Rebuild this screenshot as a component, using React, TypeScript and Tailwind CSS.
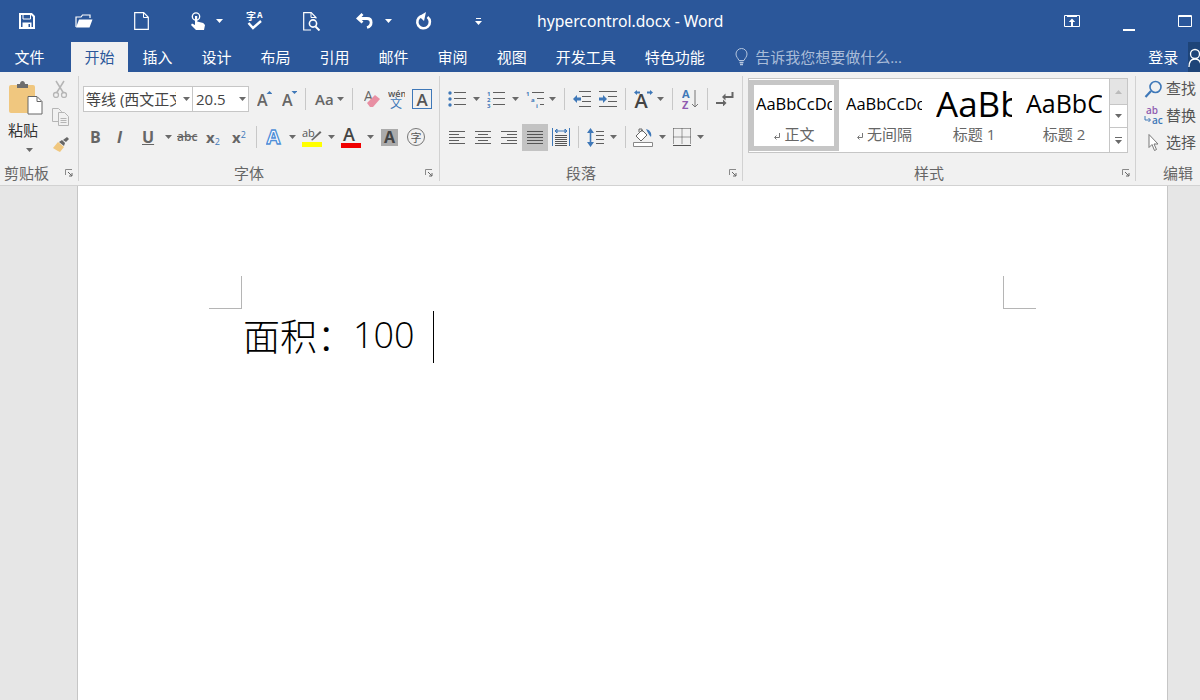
import React from "react";

const G = "#666666";
const B = "#3f78b8";

const I = ({ w, h, children, className = "" }: { w: number; h: number; children: React.ReactNode; className?: string }) => (
  <svg width={w} height={h} viewBox={`0 0 ${w} ${h}`} fill="none" className={`shrink-0 ${className}`}>
    {children}
  </svg>
);
const Caret = ({ c = "#6a6a6a", className = "" }: { c?: string; className?: string }) => (
  <I w={7} h={4} className={className}>
    <path d="M0 0h7L3.5 4z" fill={c} />
  </I>
);
const Sep = ({ className = "" }: { className?: string }) => <div className={`w-px h-[22px] bg-[#c8c8c8] shrink-0 ${className}`} />;
const GroupSep = () => <div className="w-px my-1 bg-[#d2d2d2] shrink-0" />;
const Launcher = ({ className = "" }: { className?: string }) => (
  <I w={8} h={8} className={className}>
    <path d="M.5 6V.5H7" stroke="#8a8a8a" />
    <path d="M3 3l4 4M7 4v3H4" stroke="#666" />
  </I>
);
const HLines = ({ x, ys, w, c = "#5f5f5f" }: { x: number; ys: number[]; w: number; c?: string }) => (
  <>
    {ys.map((y) => (
      <path key={y} d={`M${x} ${y + 0.5}h${w}`} stroke={c} />
    ))}
  </>
);
const Tab = ({ t, className = "" }: { t: string; className?: string }) => (
  <div className={`h-full flex items-center px-[14.5px] text-white text-[15px] ${className}`}>{t}</div>
);
const Style = ({ sample, label, className, mark }: { sample: string; label: string; className: string; mark?: boolean }) => (
  <div className="w-[76px] h-[60px] flex flex-col items-center shrink-0">
    <div className={`w-full h-[38px] flex items-center overflow-hidden whitespace-nowrap text-black ${className}`}>{sample}</div>
    <div className="h-[22px] flex items-center text-[15px] text-[#666] whitespace-nowrap">
      {mark && (
        <I w={8} h={8} className="mr-[3px] mt-[3px]">
          <path d="M6.5 1v4.5H2M3.5 3.5L1.5 5.5l2 2" stroke="#777" />
        </I>
      )}
      {label}
    </div>
  </div>
);

export default function App() {
  return (
    <div className="w-[1200px] h-[700px] overflow-hidden flex flex-col bg-[#e6e6e6] font-['Open_Sans','Noto_Sans_CJK_SC',sans-serif]">
      {/* title bar */}
      <div className="h-[42px] bg-[#2b579a] flex items-center shrink-0 text-white">
        <I w={16} h={16} className="ml-[19px]">
          <path d="M1 1h11.5L15 3.5V15H1z" stroke="#fff" strokeWidth="2" />
          <path d="M4 1.5h7.5v4.5H4z" stroke="#fff" />
          <path d="M3.5 9.5h9V15h-9z" fill="#fff" />
          <path d="M9.5 11h1.5v3H9.5z" fill="#2b579a" />
        </I>
        <I w={18} h={14} className="ml-[40px]">
          <path d="M1 13V3h5l1.5-2H15v3" stroke="#fff" strokeWidth="1.2" />
          <path d="M1 13.5L4 5.5h13.5L14.5 13.5z" fill="#fff" />
        </I>
        <I w={15} h={18} className="ml-[41px]">
          <path d="M.7.7h9l4.6 4.6v12H.7z" stroke="#fff" strokeWidth="1.2" />
          <path d="M9.5 1v4.5H14" stroke="#fff" />
        </I>
        <I w={16} h={19} className="ml-[41px]">
          <circle cx="6" cy="4.5" r="3.7" stroke="#fff" strokeWidth="1.3" />
          <path d="M5 4h2.2v5.5l6 1.5 1.8 2-1 5H6l-5-5 1-1.5 3 1.5z" fill="#fff" />
        </I>
        <Caret c="#fff" className="ml-[10px]" />
        <I w={18} h={20} className="ml-[23px]">
          <text x="0" y="9" fontSize="10" fill="#fff" fontWeight="700">字</text>
          <text x="11" y="7" fontSize="8" fill="#fff" fontWeight="700">A</text>
          <path d="M2.5 12l4.5 5 8-7" stroke="#fff" strokeWidth="2.4" />
        </I>
        <I w={18} h={19} className="ml-[39px]">
          <path d="M8 18H.7V.7h7.5L13 5.5v1" stroke="#fff" strokeWidth="1.2" />
          <path d="M8 1v4.5h5" stroke="#fff" />
          <circle cx="10" cy="11.5" r="3.6" stroke="#fff" strokeWidth="1.6" />
          <path d="M12.5 14.5l4 4" stroke="#fff" strokeWidth="2" />
        </I>
        <I w={18} h={16} className="ml-[35px]">
          <path d="M6.500 1L2 5.500l4.500 4" stroke="#fff" strokeWidth="2.8" />
          <path d="M3 5.500h8c5.500 0 5.500 7.500 0 9" stroke="#fff" strokeWidth="2.8" />
        </I>
        <Caret c="#fff" className="ml-[11px]" />
        <I w={17} h={18} className="ml-[23px]">
          <path d="M12.500 5A6.300 6.300 0 1 1 6 4.200" stroke="#fff" strokeWidth="2.600" />
          <path d="M11 0L4 4.200l5 4.800z" fill="#fff" />
        </I>
        <I w={7} h={7} className="ml-[43px]">
          <path d="M1 .5h5" stroke="#fff" />
          <path d="M0 3h7L3.5 7z" fill="#fff" />
        </I>
        <div className="ml-[55px] mt-[2px] text-[15.700px] leading-none whitespace-nowrap w-[190px] font-['Noto_Sans',sans-serif]">hypercontrol.docx - Word</div>
        <I w={16} h={12} className="ml-[337px]">
          <path d="M.5.5h15v11H.5z" stroke="#fff" />
          <path d="M3 1.5h10" stroke="#fff" />
          <path d="M8 3.5l3.2 3.5H9v4H7V7H4.800z" fill="#fff" />
        </I>
        <div className="ml-[43px] mt-[17px] w-[12px] h-[2px] bg-white" />
        <I w={14} h={12} className="ml-[43px]">
          <path d="M.5.5h13v11H.5z" stroke="#fff" />
          <path d="M1 1.500h12" stroke="#fff" />
        </I>
      </div>

      {/* tabs */}
      <div className="h-[30px] bg-[#2b579a] flex items-center shrink-0 whitespace-nowrap">
        <Tab t="文件" className="mr-[12px]" />
        <div className="h-full flex items-center px-[13.5px] bg-[#f1f1f1] text-[#2b579a] text-[15px]">开始</div>
        <Tab t="插入" />
        <Tab t="设计" />
        <Tab t="布局" />
        <Tab t="引用" />
        <Tab t="邮件" />
        <Tab t="审阅" />
        <Tab t="视图" />
        <Tab t="开发工具" />
        <Tab t="特色功能" />
        <I w={13} h={18} className="ml-[16px]">
          <path d="M4 12.500C3 10 1 9 1 6a5.500 5.500 0 0 1 11 0c0 3-2 4-3 6.500z" stroke="#b5c6de" />
          <path d="M4.500 14.500h4M5 16.500h3" stroke="#b5c6de" strokeWidth="1.4" />
        </I>
        <div className="ml-[7px] w-[393px] shrink-0 text-[15px] text-[#a9bcd8]">告诉我您想要做什么...</div>
        <div className="shrink-0 text-[15px] text-white">登录</div>
        <div className="ml-[10px] h-full w-[12px] shrink-0 bg-[#1e4478] overflow-hidden">
          <I w={16} h={24} className="mt-[3px]">
            <circle cx="7" cy="9" r="4.500" stroke="#fff" strokeWidth="1.300" />
            <path d="M1 22c0-5 2-8 6-8s6 3 6 8" stroke="#fff" strokeWidth="1.300" />
          </I>
        </div>
      </div>

      {/* ribbon */}
      <div className="h-[114px] bg-[#f1f1f1] border-b border-[#d2d2d2] flex shrink-0 text-[#666]">
        {/* clipboard */}
        <div className="w-[78px] flex flex-col shrink-0">
          <div className="flex h-[87px]">
            <div className="ml-[8px] w-[36px] flex flex-col items-start">
              <I w={36} h={36} className="mt-[8px]">
                <rect x="1" y="5" width="26" height="28" rx="2" fill="#f0c77f" />
                <path d="M9 4h3c0-4 5-4 5 0h3v4H9z" fill="#6d6d6d" />
                <path d="M20 16.500h9l5 5V34H20z" fill="#fff" stroke="#666" />
                <path d="M29 17v4.500h4.500" stroke="#666" />
              </I>
              <div className="mt-[4px] text-[15px] leading-[20px] text-[#333]">粘贴</div>
              <Caret className="mt-[8px] ml-[18px]" />
            </div>
            <div className="ml-[8px] w-[18px] flex flex-col items-start">
              <I w={16} h={18} className="mt-[8px]">
                <path d="M4 1l7.500 12M12 1L4.500 13" stroke="#b5b5b5" strokeWidth="1.500" />
                <circle cx="4" cy="15" r="2.500" stroke="#b5b5b5" strokeWidth="1.300" />
                <circle cx="12" cy="15" r="2.500" stroke="#b5b5b5" strokeWidth="1.300" />
              </I>
              <I w={17} h={18} className="mt-[10px]">
                <path d="M.5.500h6l3 3v10H.5z" fill="#f1f1f1" stroke="#b5b5b5" />
                <path d="M6.500 4.500h6l4 4v9h-10z" fill="#f1f1f1" stroke="#b5b5b5" />
                <path d="M8.500 10.500h6M8.500 12.500h6M8.500 14.500h6" stroke="#b5b5b5" />
              </I>
              <I w={18} h={16} className="mt-[11px]">
                <path d="M1 11l5-6 6 5-4 5C5 14 3 12 1 11z" fill="#f0c77f" />
                <path d="M7 5l3-2 3 3-1 3z" fill="#666" />
                <path d="M11 3l4-3 2 2-3 3z" fill="#666" />
              </I>
            </div>
          </div>
          <div className="mt-auto mb-[4px] h-[16px] flex items-center">
            <span className="ml-[4px] text-[15px]">剪贴板</span>
            <Launcher className="ml-auto mr-[5px]" />
          </div>
        </div>
        <GroupSep />

        {/* font */}
        <div className="w-[360px] flex flex-col shrink-0">
          <div className="mt-[14px] h-[26px] flex items-center">
            <div className="ml-[4px] w-[110px] h-[26px] bg-white border border-[#c6c6c6] flex items-center shrink-0">
              <div className="ml-[2px] w-[90px] overflow-hidden whitespace-nowrap text-[15px] text-[#444]">等线 (西文正文)</div>
              <Caret className="ml-[7px]" />
            </div>
            <div className="-ml-px w-[57px] h-[26px] bg-white border border-[#c6c6c6] flex items-center shrink-0">
              <div className="ml-[3px] w-[39px] text-[15px] text-[#444]">20.5</div>
              <Caret className="ml-[4px]" />
            </div>
            <I w={15} h={16} className="ml-[8px]">
              <text x="0" y="15" fontSize="16" fontWeight="600" fill={G}>A</text>
              <path d="M9.500 3l3-3 3 3z" fill={B} />
            </I>
            <I w={15} h={16} className="ml-[10px]">
              <text x="0" y="15" fontSize="16" fontWeight="600" fill={G}>A</text>
              <path d="M9.500 0h6l-3 3z" fill={B} />
            </I>
            <Sep className="ml-[8px]" />
            <span className="ml-[9px] w-[18px] text-[15px] font-semibold leading-none shrink-0">Aa</span>
            <Caret className="ml-[4px]" />
            <Sep className="ml-[8px]" />
            <I w={17} h={18} className="ml-[11px]">
              <text x="0" y="11" fontSize="14" fill={G}>A</text>
              <path d="M3 13l8-8 5 4-7 8H6z" fill="#e88fa3" />
            </I>
            <I w={17} h={20} className="ml-[7px]">
              <text x="0" y="8" fontSize="9" fontWeight="600" fill="#555">wén</text>
              <text x="2" y="19" fontSize="12" fill={B}>文</text>
            </I>
            <div className="ml-[7px] w-[20px] h-[20px] border border-[#3f78b8] flex items-center justify-center text-[17px] font-semibold leading-none text-[#555] shrink-0">A</div>
          </div>
          <div className="mt-[12px] h-[26px] flex items-center">
            <span className="ml-[11px] w-[10px] text-[16px] font-bold leading-none shrink-0">B</span>
            <span className="ml-[17px] w-[10px] text-[16px] font-bold italic leading-none shrink-0">I</span>
            <span className="ml-[15px] w-[12px] text-[16px] font-bold underline leading-none shrink-0">U</span>
            <Caret className="ml-[11px]" />
            <span className="ml-[5px] w-[20px] text-[12px] font-semibold line-through leading-none shrink-0">abc</span>
            <span className="ml-[9px] w-[15px] text-[15px] font-bold leading-none shrink-0">
              x<sub className="text-[9px] text-[#3f78b8] font-normal">2</sub>
            </span>
            <span className="ml-[11px] w-[15px] text-[15px] font-bold leading-none shrink-0">
              x<sup className="text-[9px] text-[#3f78b8] font-normal">2</sup>
            </span>
            <Sep className="ml-[9px]" />
            <I w={18} h={19} className="ml-[9px]">
              <text x="0.500" y="16" fontSize="20" fontWeight="700" fill="#fff" stroke="#4f8fd8" strokeWidth="1.300">A</text>
            </I>
            <Caret className="ml-[5px]" />
            <I w={20} h={20} className="ml-[6px]">
              <text x="0" y="10" fontSize="11" fill="#555">ab</text>
              <path d="M9 13l9-9 1.500 1.500-9 8z" fill="#666" />
              <rect y="15" width="20" height="5" fill="#ffff00" />
            </I>
            <Caret className="ml-[6px]" />
            <I w={20} h={21} className="ml-[6px]">
              <text x="2" y="14" fontSize="18" fontWeight="600" fill="#444">A</text>
              <rect y="16" width="20" height="5" fill="#f00000" />
            </I>
            <Caret className="ml-[6px]" />
            <div className="ml-[7px] w-[17px] h-[17px] bg-[#ababab] flex items-center justify-center text-[16px] font-bold leading-none text-[#444] shrink-0">A</div>
            <div className="ml-[9px] w-[18px] h-[18px] rounded-full border border-[#777] flex items-center justify-center text-[11px] leading-none text-[#555] shrink-0">字</div>
          </div>
          <div className="mt-auto mb-[4px] h-[16px] flex items-center">
            <span className="ml-[155px] text-[15px]">字体</span>
            <Launcher className="ml-auto mr-[6px]" />
          </div>
        </div>
        <GroupSep />

        {/* paragraph */}
        <div className="w-[302px] flex flex-col shrink-0">
          <div className="mt-[14px] h-[26px] flex items-center">
            <I w={18} h={18} className="ml-[8px]">
              <circle cx="2" cy="3" r="1.700" fill={B} />
              <circle cx="2" cy="9" r="1.700" fill={B} />
              <circle cx="2" cy="15" r="1.700" fill={B} />
              <HLines x={6} ys={[2, 8, 14]} w={12} />
            </I>
            <Caret className="ml-[7px]" />
            <I w={18} h={18} className="ml-[7px]">
              <text x="0" y="6" fontSize="6" fontWeight="700" fill={B}>1</text>
              <text x="0" y="12" fontSize="6" fontWeight="700" fill={B}>2</text>
              <text x="0" y="18" fontSize="6" fontWeight="700" fill={B}>3</text>
              <HLines x={6} ys={[2, 8, 14]} w={12} />
            </I>
            <Caret className="ml-[7px]" />
            <I w={18} h={18} className="ml-[7px]">
              <text x="0" y="6" fontSize="6" fontWeight="700" fill={B}>1</text>
              <text x="5" y="12" fontSize="6" fontWeight="700" fill={B}>a</text>
              <text x="10" y="18" fontSize="6" fontWeight="700" fill={B}>i</text>
              <HLines x={6} ys={[2]} w={12} />
              <HLines x={11} ys={[8]} w={7} />
              <HLines x={14} ys={[14]} w={4} />
            </I>
            <Caret className="ml-[5px]" />
            <Sep className="ml-[8px]" />
            <I w={18} h={16} className="ml-[8px]">
              <HLines x={6} ys={[0, 15]} w={12} />
              <HLines x={9} ys={[5, 10]} w={9} />
              <path d="M0 8l4-4v2.500h4v3H4V12z" fill={B} />
            </I>
            <I w={18} h={16} className="ml-[8px]">
              <HLines x={0} ys={[0, 15]} w={18} />
              <HLines x={9} ys={[5, 10]} w={9} />
              <path d="M8 8L4 4v2.500H0v3h4V12z" fill={B} />
            </I>
            <Sep className="ml-[8px]" />
            <I w={19} h={18} className="ml-[8px]">
              <text x="0.500" y="18" fontSize="20" fontWeight="600" fill="#444">A</text>
              <path d="M0 2.500L3 0v1.500h3v2H3V5zM19 2.500L16 0v1.500h-3v2h3V5z" fill={B} />
            </I>
            <Caret className="ml-[4px]" />
            <Sep className="ml-[8px]" />
            <I w={18} h={20} className="ml-[9px]">
              <text x="0" y="9" fontSize="11" fontWeight="700" fill={B}>A</text>
              <text x="0" y="20" fontSize="11" fontWeight="700" fill="#8f5bb0">Z</text>
              <path d="M13 1v17M10 15l3 3 3-3" stroke="#777" />
            </I>
            <Sep className="ml-[7px]" />
            <I w={18} h={14} className="ml-[8px]">
              <path d="M16.500 0v5H7" stroke="#666" strokeWidth="2" />
              <path d="M9.500 1.500L6 5l3.500 3.500z" fill="#666" />
              <path d="M0 11h8" stroke="#666" strokeWidth="2" />
              <path d="M7 7.500l3.500 3.500L7 14.500z" fill="#666" />
            </I>
          </div>
          <div className="mt-[12px] h-[26px] flex items-center">
            <I w={16} h={14} className="ml-[9px]">
              <HLines x={0} ys={[1, 7, 13]} w={16} />
              <HLines x={0} ys={[4, 10]} w={10} />
            </I>
            <I w={16} h={14} className="ml-[10px]">
              <HLines x={0} ys={[1, 7, 13]} w={16} />
              <HLines x={3} ys={[4, 10]} w={10} />
            </I>
            <I w={16} h={14} className="ml-[10px]">
              <HLines x={0} ys={[1, 7, 13]} w={16} />
              <HLines x={6} ys={[4, 10]} w={10} />
            </I>
            <div className="ml-[5px] w-[26px] h-[27px] bg-[#c3c3c3] flex items-center justify-center shrink-0">
              <I w={16} h={14}>
                <HLines x={0} ys={[1, 4, 7, 10, 13]} w={16} c="#555" />
              </I>
            </div>
            <I w={18} h={18} className="ml-[4px]">
              <path d="M.5 0v18M17.500 0v18" stroke={B} />
              <path d="M3 3h12M3 3l2-2v4zM15 3l-2-2v4z" stroke={B} />
              <HLines x={3} ys={[7, 9, 11, 13, 15, 17]} w={12} c="#555" />
            </I>
            <Sep className="ml-[8px]" />
            <I w={17} h={19} className="ml-[8px]">
              <path d="M3.500 2v15" stroke={B} strokeWidth="1.600" />
              <path d="M0 5l3.500-5L7 5zM0 14l3.500 5L7 14z" fill={B} />
              <HLines x={9} ys={[3, 7, 11, 15]} w={8} />
            </I>
            <Caret className="ml-[6px]" />
            <Sep className="ml-[8px]" />
            <I w={20} h={21} className="ml-[7px]">
              <path d="M3 9l6-6 5 5-6 6z" stroke="#666" fill="#fff" />
              <path d="M6 5V2h3v3" stroke="#666" />
              <path d="M13 2c4 1 6 4 5 8-2-2-3-4-5-8z" fill={B} />
              <path d="M.5 15.500h19v4H.5z" fill="#fff" stroke="#888" />
            </I>
            <Caret className="ml-[6px]" />
            <I w={18} h={18} className="ml-[7px]">
              <path d="M.5.500h17M.5.500v16M17.500.500v16M9 .500v16M.5 9h17" stroke="#444" strokeDasharray="1 1" />
              <path d="M0 17.500h18" stroke="#555" />
            </I>
            <Caret className="ml-[6px]" />
          </div>
          <div className="mt-auto mb-[4px] h-[16px] flex items-center">
            <span className="ml-[126px] text-[15px]">段落</span>
            <Launcher className="ml-auto mr-[5px]" />
          </div>
        </div>
        <GroupSep />

        {/* styles */}
        <div className="w-[392px] flex flex-col shrink-0">
          <div className="ml-[5px] mt-[6px] w-[380px] h-[75px] bg-white border border-[#c6c6c6] flex shrink-0">
            <div className="w-[90px] h-[71px] mt-px border-[5px] border-[#c6c6c6] flex items-center justify-center shrink-0">
              <Style sample="AaBbCcDd" label="正文" mark className="text-[16.500px]" />
            </div>
            <div className="ml-[7px] mt-[6px]">
              <Style sample="AaBbCcDd" label="无间隔" mark className="text-[16.500px]" />
            </div>
            <div className="ml-[14px] mt-[6px]">
              <Style sample="AaBbCcDd" label="标题 1" className="text-[35px] font-medium" />
            </div>
            <div className="ml-[14px] mt-[6px]">
              <Style sample="AaBbCcDd" label="标题 2" className="text-[25px]" />
            </div>
            <div className="ml-auto w-[18px] h-full flex flex-col border-l border-[#c6c6c6] shrink-0">
              <div className="h-[26px] bg-[#e4e4e4] border-b border-[#c6c6c6] flex items-center justify-center">
                <I w={7} h={4}>
                  <path d="M0 4h7L3.500 0z" fill="#bbb" />
                </I>
              </div>
              <div className="h-[23px] border-b border-[#c6c6c6] flex items-center justify-center">
                <Caret />
              </div>
              <div className="flex-1 flex flex-col items-center justify-center gap-[2px]">
                <div className="w-[7px] h-px bg-[#6a6a6a]" />
                <Caret />
              </div>
            </div>
          </div>
          <div className="mt-auto mb-[4px] h-[16px] flex items-center">
            <span className="ml-[171px] text-[15px]">样式</span>
            <Launcher className="ml-auto mr-[5px]" />
          </div>
        </div>
        <GroupSep />

        {/* editing */}
        <div className="flex-1 flex flex-col">
          <div className="mt-[3px] text-[15px] whitespace-nowrap text-[#555]">
            <div className="h-[27px] flex items-center">
              <I w={20} h={18} className="ml-[8px]">
                <circle cx="11.500" cy="7" r="5.500" stroke={B} strokeWidth="1.600" />
                <path d="M7 11l-5.500 6" stroke={B} strokeWidth="2.200" />
              </I>
              <span className="ml-[2px]">查找</span>
            </div>
            <div className="h-[27px] flex items-center">
              <I w={20} h={19} className="ml-[8px]">
                <text x="2" y="8" fontSize="10" fontWeight="600" fill="#8f5bb0">ab</text>
                <text x="8" y="18" fontSize="10" fontWeight="600" fill={B}>ac</text>
                <path d="M1 10v4h5M4.500 12l2 2-2 2" stroke={B} />
              </I>
              <span className="ml-[2px]">替换</span>
            </div>
            <div className="h-[27px] flex items-center">
              <I w={20} h={17} className="ml-[8px]">
                <path d="M5 .500v13l3-3 2.500 6 2-1-2.500-5.500h4z" fill="#fff" stroke="#777" />
              </I>
              <span className="ml-[2px]">选择</span>
            </div>
          </div>
          <div className="mt-auto mb-[4px] h-[16px] flex items-center">
            <span className="ml-[27px] text-[15px]">编辑</span>
          </div>
        </div>
      </div>

      {/* document */}
      <div className="flex-1 min-h-0">
        <div className="ml-[77px] w-[1091px] h-full bg-white border-x border-[#c6c6c6] pt-[90px]">
          <div className="flex justify-between pl-[131px] pr-[131px]">
            <div className="w-[33px] h-[33px] border-r border-b border-[#b5b5b5]" />
            <div className="w-[33px] h-[33px] border-l border-b border-[#b5b5b5]" />
          </div>
          <div className="mt-[2px] pl-[165px] h-[52px] flex items-center text-black font-['Noto_Sans_CJK_SC',sans-serif] font-light text-[37px] leading-none whitespace-nowrap">
            <span className="mb-[4px]">面积：</span>
            <span className="mb-[4px] -ml-px font-['Open_Sans',sans-serif] font-light text-[36px]">100</span>
            <div className="ml-[18px] w-px h-[52px] bg-black" />
          </div>
        </div>
      </div>
    </div>
  );
}
